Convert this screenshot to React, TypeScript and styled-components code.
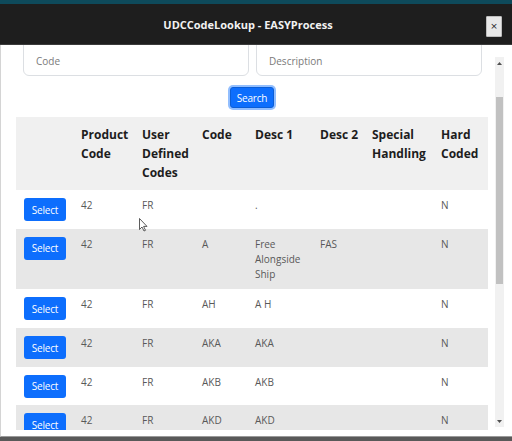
import React from "react";
import styled, { createGlobalStyle } from "styled-components";

const GlobalStyle = createGlobalStyle`
  html, body { margin: 0; padding: 0; }
  body {
    width: 512px;
    height: 441px;
    overflow: hidden;
    font-family: "Open Sans", "Noto Sans", Arial, sans-serif;
    background: #595959;
  }
  * { box-sizing: border-box; }
`;

const Page = styled.div`
  position: relative;
  width: 512px;
  height: 441px;
  display: flex;
  flex-direction: column;
  background: #595959;
`;

const TopStrip = styled.div`
  height: 4px;
  background: #0e4a5b;
`;

const Header = styled.header`
  height: 41px;
  background: #1e1e1e;
  border-bottom: 1px solid #3b3b3b;
  display: flex;
  align-items: center;
`;

const Title = styled.h1`
  flex: 1;
  margin: 0;
  padding-left: 10px;
  text-align: center;
  color: #f2f2f2;
  font-size: 11px;
  font-weight: 700;
  line-height: 1;
`;

const CloseButton = styled.button`
  width: 16px;
  height: 21px;
  margin-right: 10px;
  margin-top: 4px;
  padding: 0;
  border: 1px solid #bdbdbd;
  border-radius: 1px;
  background: #e8e8e8;
  color: #222;
  font-family: "DejaVu Sans", sans-serif;
  font-size: 9px;
  line-height: 1;
  display: flex;
  align-items: center;
  justify-content: center;
`;

const Body = styled.main`
  height: 392px;
  background: #ffffff;
  border-left: 1px solid #d4d4d4;
  border-bottom: 1px solid #9a9a9a;
  display: flex;
`;

const Viewport = styled.div`
  width: 472px;
  margin-left: 15px;
  margin-bottom: 6px;
  overflow: hidden;
`;

const Scrolled = styled.div`
  margin-top: -8px;
`;

const FormRow = styled.div`
  display: flex;
  gap: 7px;
  padding: 0 6px 0 7px;
`;

const Input = styled.input`
  flex: 1;
  min-width: 0;
  height: 39px;
  padding: 16px 12px 7px;
  border: 1px solid #dcdfe3;
  border-radius: 6px;
  font-family: "Open Sans", Arial, sans-serif;
  font-size: 10px;
  color: #333;
  outline: none;
  &::placeholder { color: #7a7a7a; }
`;

const SearchRow = styled.div`
  display: flex;
  justify-content: center;
  margin-top: 11px;
`;

const SearchButton = styled.button`
  height: 21px;
  padding: 0 6px;
  border: 1px solid #0b5ed7;
  border-radius: 3px;
  background: #0d6efd;
  color: #fff;
  font-family: "Open Sans", Arial, sans-serif;
  font-size: 10px;
  letter-spacing: -0.2px;
  line-height: 1;
  box-shadow: 0 0 0 2px rgba(110, 168, 254, 0.75);
`;

const Table = styled.table`
  width: 472px;
  margin-top: 9px;
  border-collapse: collapse;
  table-layout: fixed;
`;

const Th = styled.th`
  background: #f0f0f0;
  padding: 8px 4px 8px 8px;
  text-align: left;
  vertical-align: top;
  color: #1d1d1d;
  font-size: 12px;
  font-weight: 700;
  line-height: 19px;
`;

const Tr = styled.tr<{ $striped: boolean }>`
  background: ${(p) => (p.$striped ? "#e7e7e7" : "#ffffff")};
`;

const Td = styled.td`
  padding: 8px 4px 7.7px 8px;
  vertical-align: top;
  color: #595959;
  font-size: 10px;
  line-height: 15px;
`;

const SelectButton = styled.button`
  width: 42px;
  height: 23px;
  padding: 0;
  border: none;
  border-radius: 3px;
  background: #0d6efd;
  color: #fff;
  font-family: "Open Sans", Arial, sans-serif;
  font-size: 10px;
  letter-spacing: -0.2px;
  display: block;
`;

const Scrollbar = styled.div`
  width: 9px;
  margin: 12px 8px 9px 7px;
  background: #f1f1f1;
  display: flex;
  flex-direction: column;
`;

const ScrollArrow = styled.div`
  height: 12px;
  display: flex;
  align-items: center;
  justify-content: center;
`;

const ScrollTrack = styled.div`
  flex: 1;
  display: flex;
  flex-direction: column;
  padding: 0 1px;
`;

const Thumb = styled.div<{ $offset: number; $size: number }>`
  margin-top: ${(p) => p.$offset}px;
  height: ${(p) => p.$size}px;
  background: #c1c1c1;
`;

const Cursor = styled.svg`
  position: absolute;
  left: 139px;
  top: 218px;
`;

const columns = [
  { w: 57, label: "" },
  { w: 61, label: "Product Code" },
  { w: 60, label: "User Defined Codes" },
  { w: 53, label: "Code" },
  { w: 65, label: "Desc 1" },
  { w: 52, label: "Desc 2" },
  { w: 69, label: "Special Handling" },
  { w: 55, label: "Hard Coded" },
];

const rows = [
  { product: "42", udc: "FR", code: "", d1: ".", d2: "", sh: "", hc: "N" },
  { product: "42", udc: "FR", code: "A", d1: "Free Alongside Ship", d2: "FAS", sh: "", hc: "N" },
  { product: "42", udc: "FR", code: "AH", d1: "A H", d2: "", sh: "", hc: "N" },
  { product: "42", udc: "FR", code: "AKA", d1: "AKA", d2: "", sh: "", hc: "N" },
  { product: "42", udc: "FR", code: "AKB", d1: "AKB", d2: "", sh: "", hc: "N" },
  { product: "42", udc: "FR", code: "AKD", d1: "AKD", d2: "", sh: "", hc: "N" },
];

export default function App() {
  return (
    <>
      <GlobalStyle />
      <Page>
        <TopStrip />
        <Header>
          <Title>UDCCodeLookup - EASYProcess</Title>
          <CloseButton aria-label="Close">×</CloseButton>
        </Header>
        <Body>
          <Viewport>
            <Scrolled>
              <FormRow>
                <Input placeholder="Code" />
                <Input placeholder="Description" />
              </FormRow>
              <SearchRow>
                <SearchButton>Search</SearchButton>
              </SearchRow>
              <Table>
                <colgroup>
                  {columns.map((c, i) => (
                    <col key={i} style={{ width: c.w }} />
                  ))}
                </colgroup>
                <thead>
                  <tr>
                    {columns.map((c, i) => (
                      <Th key={i}>{c.label}</Th>
                    ))}
                  </tr>
                </thead>
                <tbody>
                  {rows.map((r, i) => (
                    <Tr key={i} $striped={i % 2 === 1}>
                      <Td>
                        <SelectButton>Select</SelectButton>
                      </Td>
                      <Td>{r.product}</Td>
                      <Td>{r.udc}</Td>
                      <Td>{r.code}</Td>
                      <Td>{r.d1}</Td>
                      <Td>{r.d2}</Td>
                      <Td>{r.sh}</Td>
                      <Td>{r.hc}</Td>
                    </Tr>
                  ))}
                </tbody>
              </Table>
            </Scrolled>
          </Viewport>
          <Scrollbar>
            <ScrollArrow>
              <svg width="5" height="3" viewBox="0 0 5 3">
                <path d="M2.5 0 L5 3 L0 3 Z" fill="#505050" />
              </svg>
            </ScrollArrow>
            <ScrollTrack>
              <Thumb $offset={28} $size={187} />
            </ScrollTrack>
            <ScrollArrow>
              <svg width="5" height="3" viewBox="0 0 5 3">
                <path d="M0 0 L5 0 L2.5 3 Z" fill="#505050" />
              </svg>
            </ScrollArrow>
          </Scrollbar>
        </Body>
        <Cursor width="9" height="14" viewBox="0 0 9 14">
          <path d="M0.5 0.5 L0.5 11.5 L3 9 L5 13 L6.5 12.3 L4.6 8.4 L8 8.4 Z" fill="#fff" stroke="#333" strokeWidth="0.8" />
        </Cursor>
      </Page>
    </>
  );
}
